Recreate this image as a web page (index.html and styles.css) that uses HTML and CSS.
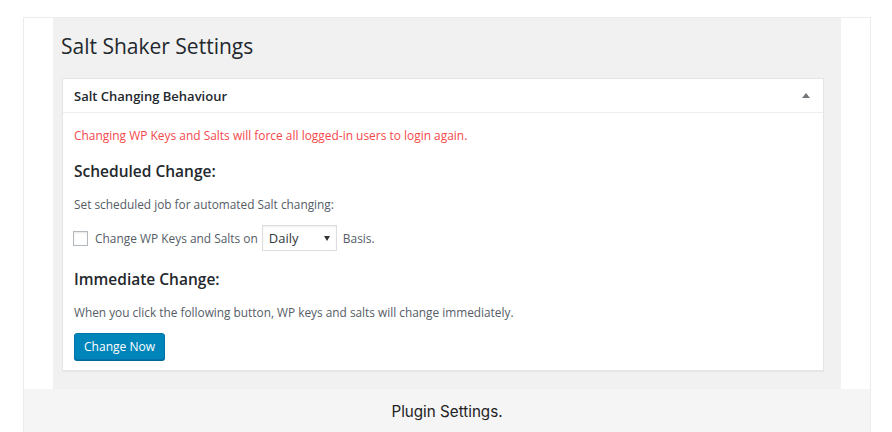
FILE: index.html
```html
<!DOCTYPE html>
<html>
<head>
<meta charset="utf-8">
<link rel="stylesheet" href="styles.css">
</head>
<body>
<figure class="figure">
  <div class="shot">
    <div class="side"></div>
    <div class="wrap">
      <h1 class="title">Salt Shaker Settings</h1>
      <div class="postbox">
        <div class="postbox-head">
          <span class="postbox-title">Salt Changing Behaviour</span>
          <span class="toggle"></span>
        </div>
        <div class="inside">
          <p class="warn">Changing WP Keys and Salts will force all logged-in users to login again.</p>
          <h3 class="sub">Scheduled Change:</h3>
          <p class="desc">Set scheduled job for automated Salt changing:</p>
          <div class="row">
            <span class="check"></span>
            <span class="label">Change WP Keys and Salts on</span>
            <span class="select">Daily<span class="caret"></span></span>
            <span class="label">Basis.</span>
          </div>
          <h3 class="sub sub2">Immediate Change:</h3>
          <p class="desc">When you click the following button, WP keys and salts will change immediately.</p>
          <button class="btn">Change Now</button>
        </div>
      </div>
    </div>
  </div>
  <figcaption class="caption">Plugin Settings.</figcaption>
</figure>
</body>
</html>
```
FILE: styles.css
```css
* { box-sizing: border-box; }
body { margin: 0; background: #fff; font-family: "Open Sans", "Noto Sans", sans-serif; }
.figure {
  margin: 17px 0 0 23px;
  width: 848px;
  border: 1px solid #ececec;
  border-bottom: none;
  background: #fff;
}
.shot { display: flex; height: 371px; }
.side { width: 29px; background: #fff; }
.wrap { width: 788px; background: #f1f1f1; padding: 0 0 0 8px; }
.title {
  margin: 0;
  padding-top: 14px;
  font-family: "Open Sans", sans-serif;
  font-weight: 400;
  font-size: 21px;
  line-height: 29px;
  color: #23282d;
  height: 60px;
}
.postbox {
  margin-left: 1px;
  width: 762px;
  background: #fff;
  border: 1px solid #e5e5e5;
  box-shadow: 0 1px 1px rgba(0,0,0,.04);
}
.postbox-head {
  display: flex;
  align-items: center;
  justify-content: space-between;
  height: 34px;
  padding: 0 12px 0 11px;
  border-bottom: 1px solid #eee;
}
.postbox-title { font-size: 13px; font-weight: 600; color: #23282d; }
.toggle {
  width: 0; height: 0;
  border-left: 4px solid transparent;
  border-right: 4px solid transparent;
  border-bottom: 5px solid #72777c;
  margin-right: 1px;
}
.inside { padding: 14px 11px 10px 11px; }
.warn { margin: 0; font-size: 11.95px; line-height: 18px; color: #f5484b; }
.sub { margin: 15px 0 0; font-size: 15.5px; font-weight: 600; line-height: 22px; color: #23282d; }
.sub2 { margin-top: 17px; }
.desc { margin: 13px 0 0; font-size: 11.85px; line-height: 18px; color: #555d66; }
.row { display: flex; align-items: center; margin-top: 12px; height: 26px; }
.check {
  width: 15px; height: 15px;
  border: 1px solid #b4b9be;
  background: #fff;
  box-shadow: inset 0 1px 2px rgba(0,0,0,.1);
  margin: 0 7px 0 -1px;
}
.label { font-size: 11.92px; color: #555d66; }
.select {
  position: relative;
  display: flex;
  align-items: center;
  width: 75px; height: 26px;
  margin: 0 6px 0 4px;
  border: 1px solid #ddd;
  box-shadow: inset 0 1px 2px rgba(0,0,0,.07);
  padding-left: 6px;
  font-size: 13px;
  color: #32373c;
}
.caret {
  position: absolute;
  right: 6px; top: 10px;
  width: 0; height: 0;
  border-left: 3px solid transparent;
  border-right: 3px solid transparent;
  border-top: 5px solid #333;
}
.btn {
  display: block;
  margin-top: 12px;
  width: 91px; height: 27px;
  background: #0085ba;
  border: 1px solid #0073aa;
  border-radius: 3px;
  color: #fff;
  font-family: "Open Sans", sans-serif;
  font-size: 12px;
  padding: 0;
  box-shadow: 0 1px 0 #006799;
}
.caption {
  height: 43px;
  background: #f5f5f5;
  display: flex;
  align-items: center;
  justify-content: center;
  font-family: Inter, sans-serif;
  font-size: 15.2px;
  color: #222;
  padding-top: 1px;
}
```
